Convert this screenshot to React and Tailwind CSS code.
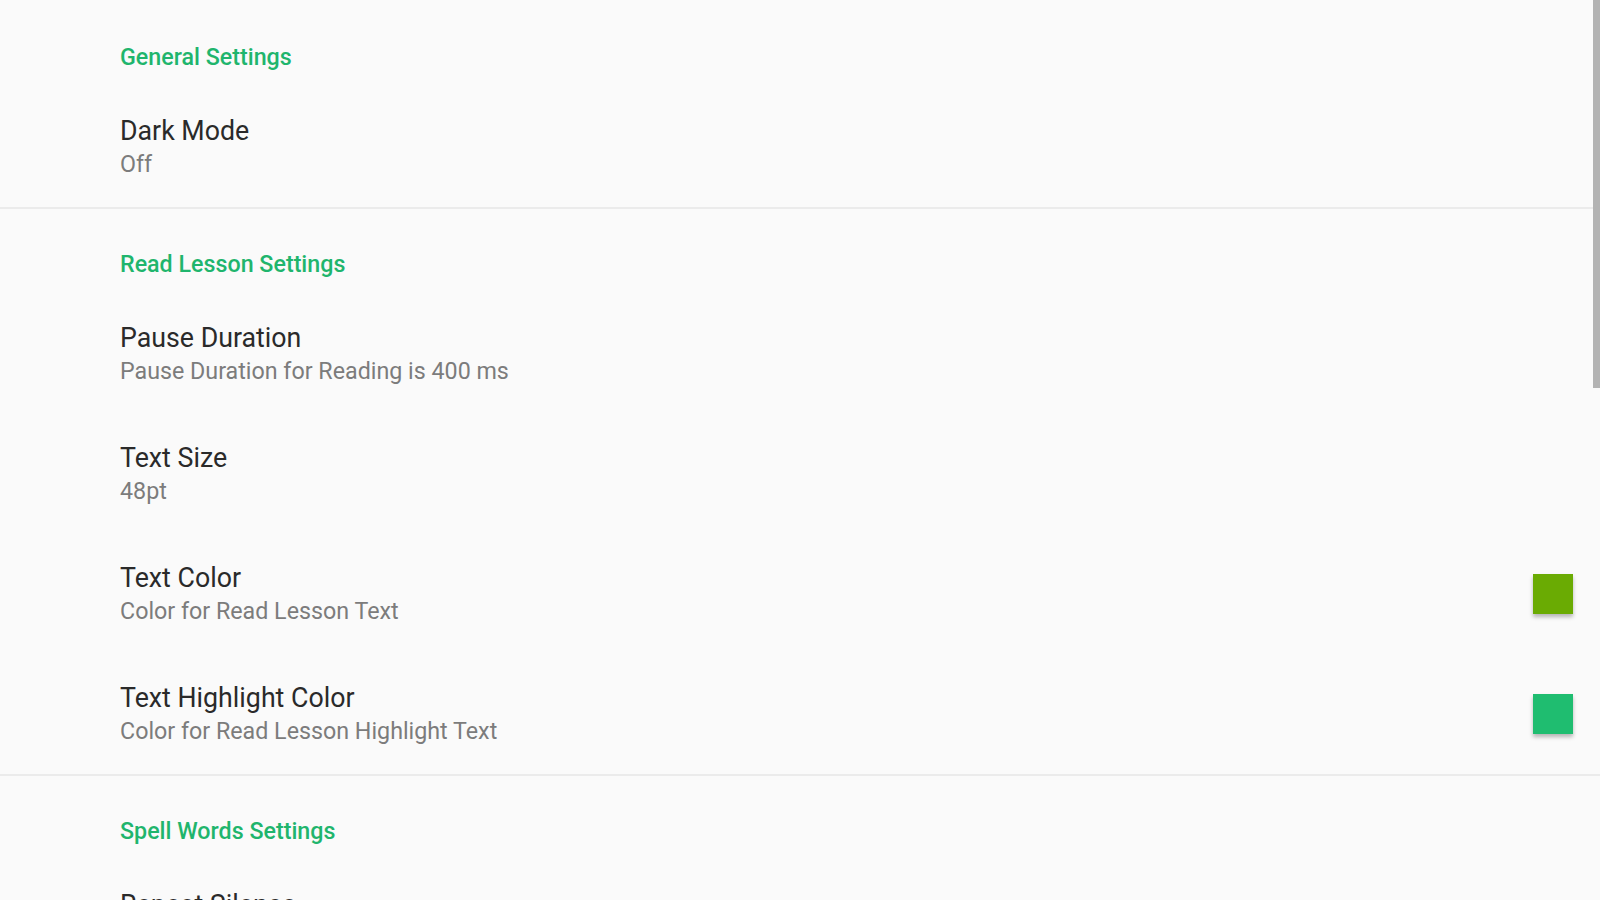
export default function App() {
  const font = { fontFamily: "Roboto, 'Noto Sans', sans-serif" };
  const Header = ({ children }) => (
    <div className="h-[32px] text-[23.25px] leading-[32px] font-medium text-[#1fb56d] mb-[14px]">{children}</div>
  );
  const Row = ({ title, sub, color }) => (
    <div className="h-[120px] flex items-center justify-between pr-[27px]">
      <div className="flex flex-col">
        <div className="text-[26.75px] leading-[32px] text-[#2a2a2a]">{title}</div>
        {sub && <div className="text-[23.25px] leading-[32px] mt-[1px] text-[#7c7c7c]">{sub}</div>}
      </div>
      {color && (
        <div className={`w-[40px] h-[40px] shadow-[0_3px_4px_rgba(0,0,0,0.28)] ${color}`} />
      )}
    </div>
  );
  return (
    <div className="relative w-[1600px] h-[900px] overflow-hidden bg-[#fafafa]" style={font}>
      <div className="absolute right-0 top-0 w-[7px] h-[388px] bg-[#b3b3b3]" />
      <section className="pt-[41px] pl-[120px]">
        <Header>General Settings</Header>
        <Row title="Dark Mode" sub="Off" />
      </section>
      <div className="h-[2px] bg-[#ebebeb]" />
      <section className="pt-[39px] pl-[120px]">
        <Header>Read Lesson Settings</Header>
        <Row title="Pause Duration" sub="Pause Duration for Reading is 400 ms" />
        <Row title="Text Size" sub="48pt" />
        <Row title="Text Color" sub="Color for Read Lesson Text" color="bg-[#6aab03]" />
        <Row title="Text Highlight Color" sub="Color for Read Lesson Highlight Text" color="bg-[#1fbd70]" />
      </section>
      <div className="h-[2px] bg-[#ebebeb]" />
      <section className="pt-[39px] pl-[120px]">
        <Header>Spell Words Settings</Header>
        <Row title="Repeat Silence" sub="Silence between repeats" />
      </section>
    </div>
  );
}
